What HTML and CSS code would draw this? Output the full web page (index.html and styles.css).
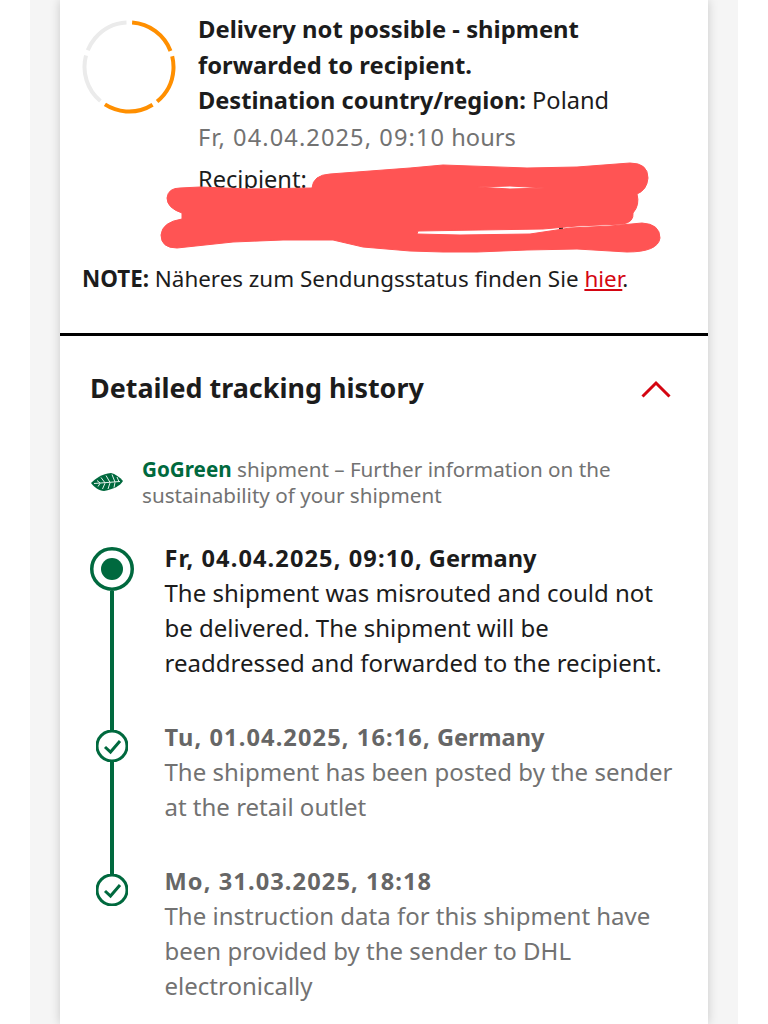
FILE: index.html
```html
<!DOCTYPE html>
<html lang="en">
<head>
<meta charset="utf-8">
<title>Tracking</title>
<link rel="stylesheet" href="styles.css">
</head>
<body>
<div class="backdrop">
  <main class="card">
    <section class="status">
      <div class="status-top">
        <svg class="ring" viewBox="0 0 94 94" width="94" height="94" aria-hidden="true">
          <circle class="ring-gray" cx="47" cy="47" r="44.5" pathLength="100"/>
          <circle class="ring-orange" cx="47" cy="47" r="44.5" pathLength="100"/>
        </svg>
        <div class="status-text">
          <p class="strong">Delivery not possible - shipment forwarded to recipient.</p>
          <p><b>Destination country/region:</b> Poland</p>
          <p class="muted"><span class="num">Fr, 04.04.2025, 09:10</span> hours</p>
          <p class="recipient">Recipient:</p>
        </div>
      </div>
      <p class="note"><b>NOTE:</b> Näheres zum Sendungsstatus finden Sie <a href="#">hier</a>.</p>
    </section>
    <section class="history">
      <header class="history-head">
        <h2>Detailed tracking history</h2>
        <svg class="chevron" viewBox="0 0 30 18" width="30" height="18" aria-hidden="true"><path d="M1.5 16.500 15 3l13.500 13.500"/></svg>
      </header>
      <div class="gogreen">
        <svg class="leaf" viewBox="0 0 34 20" width="34" height="20" aria-hidden="true">
          <path class="leaf-fill" d="M1 11C6 6 12 2 21 1c4 1 9 4 12 8-3 5-9 8-19 10C9 19 4 15 1 11z"/>
          <path class="leaf-vein" d="M4 11.500 30 9.500M10 11 7 8.500M15 10.800 11 5.500M20 10.400 16 3.500M25 10 22 2.500M29 9.700 27 5M10 11.500 8 14.500M15 11.200 12.500 17M20 10.800 18 17M25 10.400 24 15.500"/>
        </svg>
        <p><span class="green">GoGreen</span> shipment – Further information on the sustainability of your shipment</p>
      </div>
      <ol class="timeline">
        <li class="event event-current">
          <div class="rail">
            <span class="rail-top"></span>
            <svg class="marker-big" viewBox="0 0 44 44" width="44" height="44" aria-hidden="true"><circle class="mk mk-thick" cx="22" cy="22" r="20.250"/><circle class="mk-dot" cx="22" cy="22" r="11"/></svg>
            <span class="rail-line"></span>
          </div>
          <div class="event-text">
            <p class="when"><span class="num">Fr, 04.04.2025, 09:10,</span> Germany</p>
            <p class="event-body">The shipment was misrouted and could not be delivered. The shipment will be readdressed and forwarded to the recipient.</p>
          </div>
        </li>
        <li class="event">
          <div class="rail">
            <span class="rail-top"></span>
            <svg class="marker-small" viewBox="0 0 32 32" width="32" height="32" aria-hidden="true"><circle class="mk" cx="16" cy="16" r="15"/><path class="mk-check" d="M9 17l5.500 5 9.500-11"/></svg>
            <span class="rail-line"></span>
          </div>
          <div class="event-text">
            <p class="when"><span class="num">Tu, 01.04.2025, 16:16,</span> Germany</p>
            <p class="event-body">The shipment has been posted by the sender at the retail outlet</p>
          </div>
        </li>
        <li class="event">
          <div class="rail">
            <span class="rail-top"></span>
            <svg class="marker-small" viewBox="0 0 32 32" width="32" height="32" aria-hidden="true"><circle class="mk" cx="16" cy="16" r="15"/><path class="mk-check" d="M9 17l5.500 5 9.500-11"/></svg>
          </div>
          <div class="event-text">
            <p class="when"><span class="num">Mo, 31.03.2025, 18:18</span></p>
            <p class="event-body">The instruction data for this shipment have been provided by the sender to DHL electronically</p>
          </div>
        </li>
      </ol>
    </section>
  </main>
</div>
<svg class="scribble" viewBox="0 0 768 1024" width="768" height="1024" aria-hidden="true">
  <rect class="scribble-tick" x="559" y="225" width="4" height="5"/>
  <path class="scribble-ink" fill-rule="evenodd" d="M312 188Q313 175 330 174L410 168 443 165 527 168 577 167 630 163Q648 163 648 178 647 190 637 194 640 205 633 213 634 222 623 224L577 226 543 229 418 231 417 234 460 235 530 234 570 228 610 226 642 223Q660 224 660 238 658 252 627 252L577 249 527 250 477 252 443 252 410 251 363 247 333 240 283 240 233 242 177 248Q161 248 161 235 162 222 182 219L182 213Q167 208 167 198 168 188 180 188L200 187 250 189ZM477 187 510 186 545 188 510 189Z"/>
</svg>
</body>
</html>
```
FILE: styles.css
```css
* { box-sizing: border-box; }
html, body { margin: 0; padding: 0; }
body {
  width: 768px;
  height: 1024px;
  overflow: hidden;
  background: #fff;
  font-family: "Noto Sans", "Open Sans", sans-serif;
  color: #1c1c1c;
  position: relative;
}
p, h2, ol { margin: 0; padding: 0; }
b { font-weight: 700; }
.backdrop {
  margin: 0 30px;
  height: 1024px;
  padding: 0 30px;
  background: #f5f5f5;
}
.card {
  height: 1024px;
  background: #fff;
  box-shadow: 0 0 10px rgba(0, 0, 0, .18);
}
.status {
  padding: 12px 22px 0;
  height: 336px;
  border-bottom: 3px solid #000;
  font-size: 23.600px;
  line-height: 35.500px;
}
.status-top { display: flex; gap: 22px; }
.ring { flex: none; margin-top: 8px; }
.ring circle { fill: none; stroke-width: 4; transform-origin: 47px 47px; }
.ring-gray { stroke: #ebebeb; stroke-dasharray: 18 2 18 62; transform: rotate(130deg); }
.ring-orange { stroke: #ff8f00; stroke-dasharray: 18 2 18 2 18 42; transform: rotate(-86deg); }
.strong { font-weight: 700; font-size: 23.800px; }
.num { letter-spacing: 1.100px; }
.muted { color: #727272; margin-top: 1px; }
.recipient { margin-top: 7px; }
.note { margin-top: 63px; font-size: 22.400px; }
.note a { color: #d40511; text-decoration: underline; }
.history { padding: 0 30px; }
.history-head {
  display: flex;
  justify-content: space-between;
  align-items: center;
  height: 106px;
}
.history-head h2 { font-size: 26.900px; font-weight: 700; line-height: 35px; margin-bottom: 4px; }
.chevron { fill: none; stroke: #d40511; stroke-width: 3; margin-right: 7px; }
.gogreen {
  display: flex;
  align-items: center;
  gap: 18px;
  font-size: 20.650px;
  line-height: 26px;
  color: #727272;
  padding: 14px 37px 0 0;
}
.leaf { flex: none; }
.leaf-fill { fill: #00693e; }
.leaf-vein { fill: none; stroke: #fff; stroke-width: .9; }
.green { color: #00693e; font-weight: 700; }
.timeline { list-style: none; margin-top: 33px; }
.event {
  display: grid;
  grid-template-columns: 44px 1fr;
  column-gap: 30.500px;
  font-size: 24px;
  line-height: 35px;
  color: #727272;
}
.event-current { color: #1c1c1c; }
.event-text { padding-bottom: 39px; }
.event-body { margin-top: -1px; padding-bottom: 1px; }
.when { font-weight: 700; font-size: 23.600px; }
.event:not(.event-current) .when { color: #666; }
.rail { display: flex; flex-direction: column; align-items: center; }
.rail-top { width: 4px; height: 10px; background: #00693e; flex: none; }
.event-current .rail-top { height: 6px; background: transparent; }
.rail-line { width: 4px; flex: 1; background: #00693e; }
.marker-big, .marker-small { flex: none; display: block; }
.mk { fill: #fff; stroke: #00693e; stroke-width: 3; }
.mk-thick { stroke-width: 3.500; }
.mk-dot { fill: #00693e; }
.mk-check { fill: none; stroke: #00693e; stroke-width: 3; }
.scribble { position: absolute; left: 0; top: 0; }
.scribble-ink { fill: #ff5454; stroke: #ff5454; stroke-width: 1; stroke-linejoin: round; }
.scribble-tick { fill: #222; }
```
